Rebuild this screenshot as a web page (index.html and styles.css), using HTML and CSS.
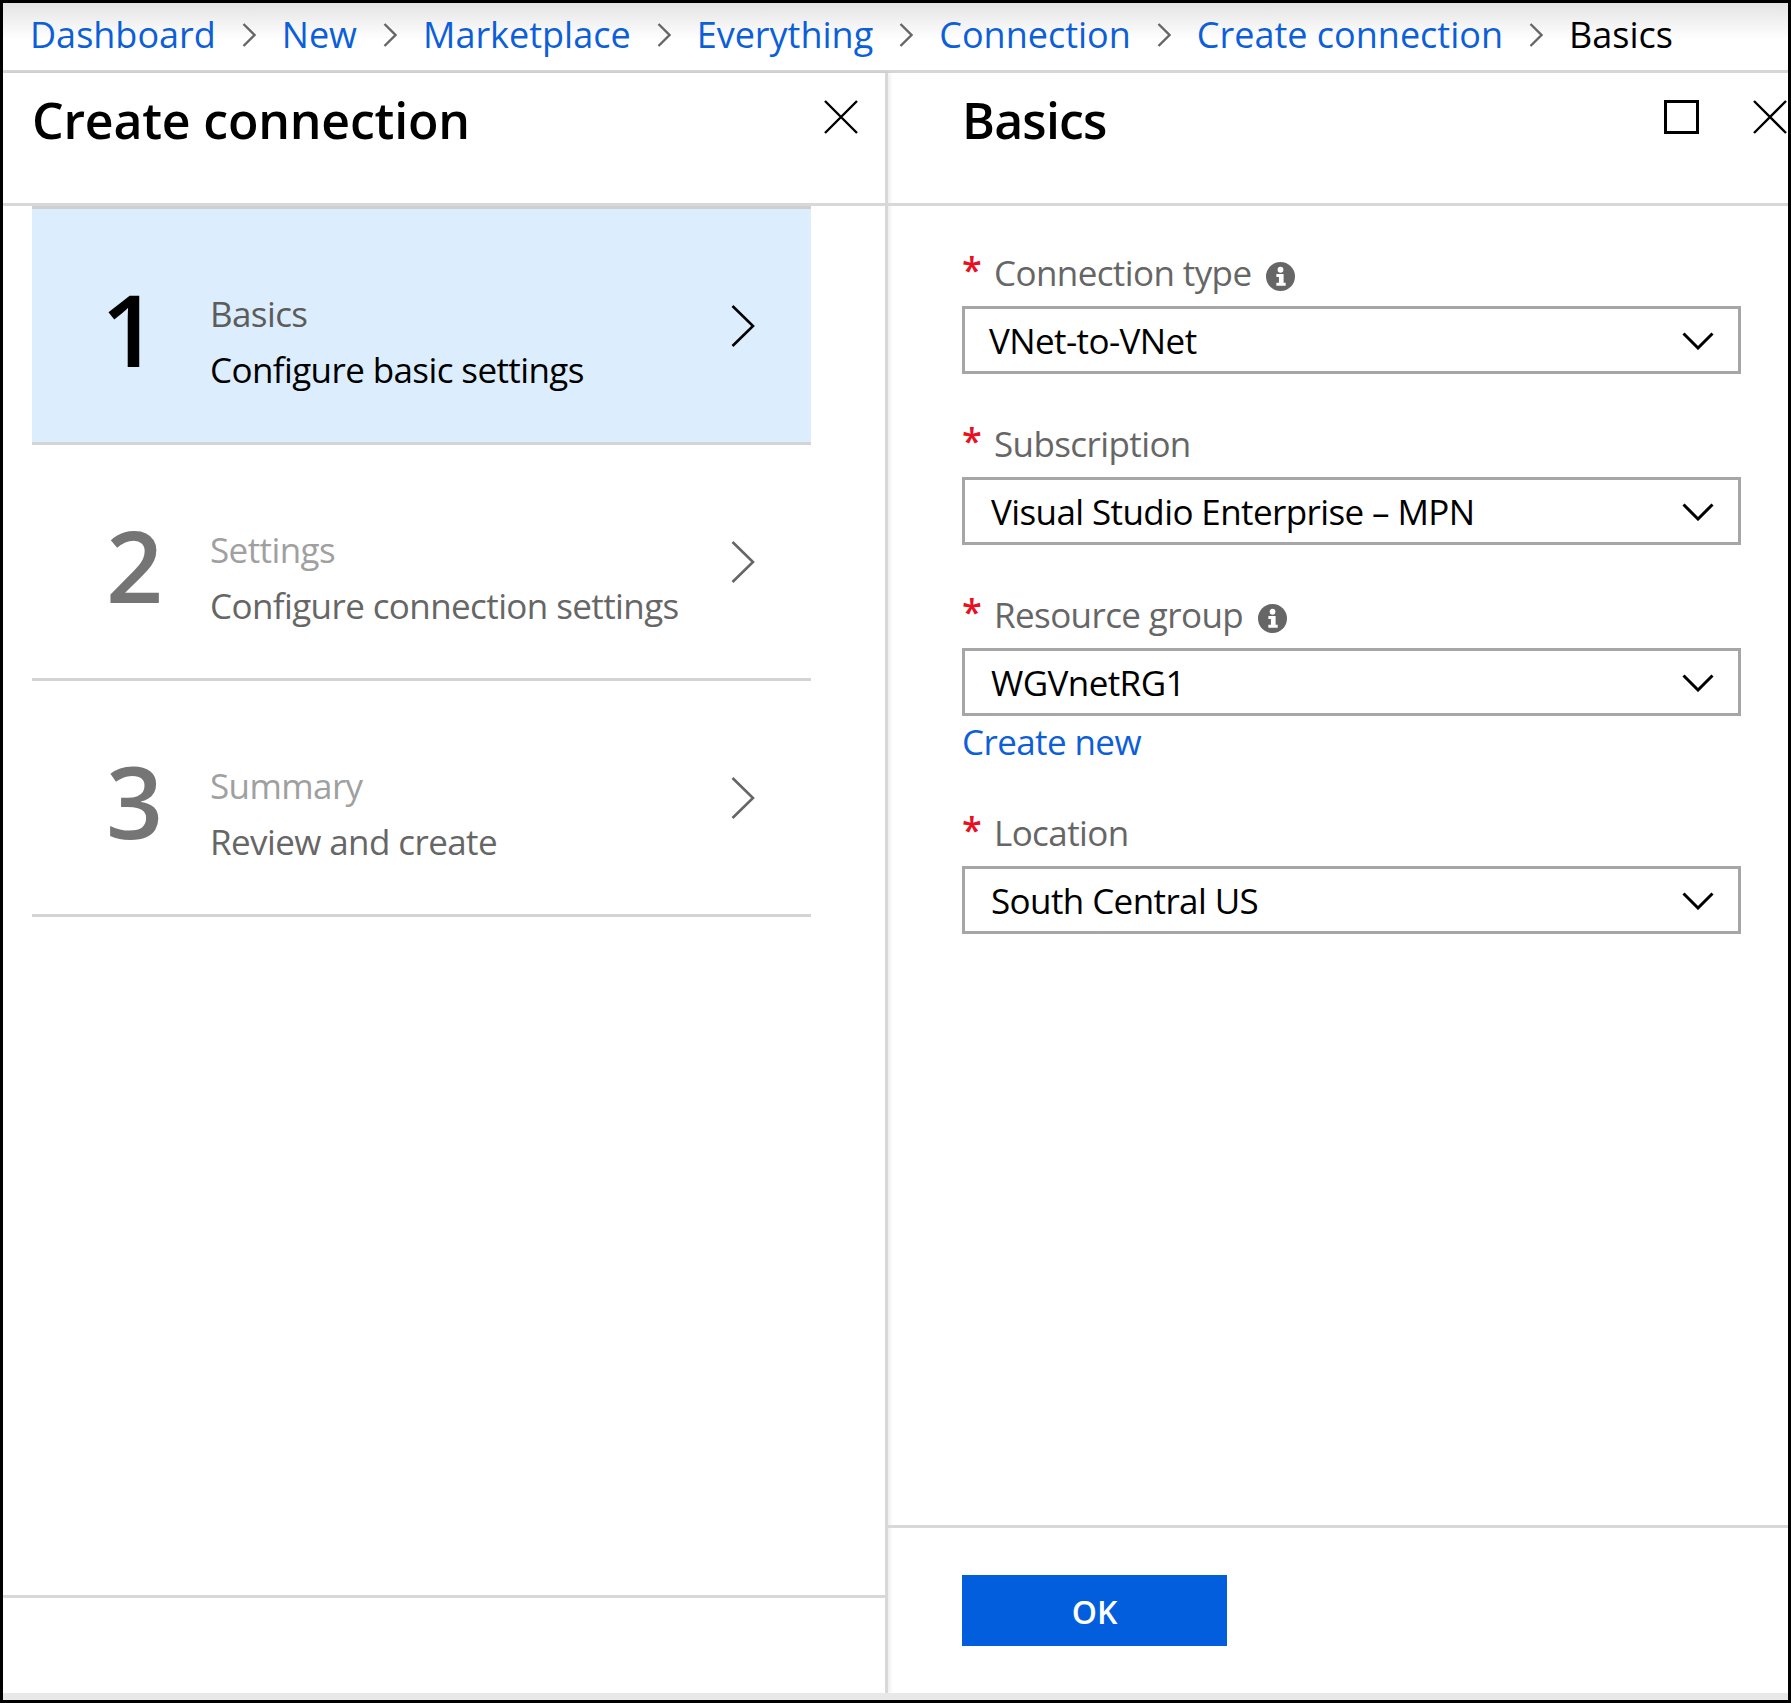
FILE: index.html
```html
<!DOCTYPE html>
<html lang="en">
<head>
<meta charset="UTF-8" />
<meta name="viewport" content="width=device-width, initial-scale=1" />
<title>Basics - Create connection</title>
<link rel="stylesheet" href="styles.css">
</head>
<body>
  <svg class="icon-defs" aria-hidden="true">
    <symbol id="crumb" viewBox="0 0 14 24"><path d="M1.5 1 L12.5 12 L1.5 23" fill="none" stroke="currentColor" stroke-width="2.4" /></symbol>
    <symbol id="chevron" viewBox="0 0 24 42"><path d="M1.5 1 L22 21 L1.5 41" fill="none" stroke="currentColor" stroke-width="2.6" /></symbol>
    <symbol id="close" viewBox="0 0 34 34"><path d="M1 1 L33 33 M33 1 L1 33" fill="none" stroke="#000" stroke-width="2.4" /></symbol>
    <symbol id="caret" viewBox="0 0 32 18"><path d="M1.5 1.5 L16 16 L30.5 1.5" fill="none" stroke="#000" stroke-width="3" /></symbol>
    <symbol id="info" viewBox="0 0 28 28"><circle cx="14" cy="14" r="14" fill="#666" /><circle cx="14" cy="7.5" r="2.8" fill="#fff" /><path d="M10 11.5 H17 V20 H19 V23 H10 V20 H12.5 V14.5 H10 Z" fill="#fff" /></symbol>
  </svg>

  <div class="frame">
    <nav class="breadcrumb" aria-label="Breadcrumb">
      <a href="#">Dashboard</a>
      <svg class="crumb-sep"><use href="#crumb" /></svg>
      <a href="#">New</a>
      <svg class="crumb-sep"><use href="#crumb" /></svg>
      <a href="#">Marketplace</a>
      <svg class="crumb-sep"><use href="#crumb" /></svg>
      <a href="#">Everything</a>
      <svg class="crumb-sep"><use href="#crumb" /></svg>
      <a href="#">Connection</a>
      <svg class="crumb-sep"><use href="#crumb" /></svg>
      <a href="#">Create connection</a>
      <svg class="crumb-sep"><use href="#crumb" /></svg>
      <span>Basics</span>
    </nav>

    <div class="blades">
      <section class="blade blade-left">
        <header class="blade-head head-left">
          <h1>Create connection</h1>
          <svg class="close-icon"><use href="#close" /></svg>
        </header>

        <div class="steps">
          <div class="step step-active">
            <div class="step-num">1</div>
            <div class="step-text">
              <div class="step-title">Basics</div>
              <div class="step-desc">Configure basic settings</div>
            </div>
            <svg class="step-chevron"><use href="#chevron" /></svg>
          </div>
          <div class="step">
            <div class="step-num">2</div>
            <div class="step-text">
              <div class="step-title">Settings</div>
              <div class="step-desc">Configure connection settings</div>
            </div>
            <svg class="step-chevron"><use href="#chevron" /></svg>
          </div>
          <div class="step">
            <div class="step-num">3</div>
            <div class="step-text">
              <div class="step-title">Summary</div>
              <div class="step-desc">Review and create</div>
            </div>
            <svg class="step-chevron"><use href="#chevron" /></svg>
          </div>
        </div>

        <footer class="foot-left"></footer>
      </section>

      <section class="blade blade-right">
        <header class="blade-head head-right">
          <h1>Basics</h1>
          <div class="head-actions">
            <div class="maximize"></div>
            <svg class="close-icon"><use href="#close" /></svg>
          </div>
        </header>

        <form class="form">
          <div class="field">
            <label class="field-label"><span class="req">*</span>Connection type<svg class="info-icon"><use href="#info" /></svg></label>
            <div class="select select-first"><span>VNet-to-VNet</span><svg class="caret"><use href="#caret" /></svg></div>
          </div>
          <div class="field">
            <label class="field-label"><span class="req">*</span>Subscription</label>
            <div class="select"><span>Visual Studio Enterprise – MPN</span><svg class="caret"><use href="#caret" /></svg></div>
          </div>
          <div class="field field-link">
            <label class="field-label"><span class="req">*</span>Resource group<svg class="info-icon"><use href="#info" /></svg></label>
            <div class="select"><span>WGVnetRG1</span><svg class="caret"><use href="#caret" /></svg></div>
            <a class="create-new" href="#">Create new</a>
          </div>
          <div class="field">
            <label class="field-label"><span class="req">*</span>Location</label>
            <div class="select"><span>South Central US</span><svg class="caret"><use href="#caret" /></svg></div>
          </div>
        </form>

        <footer class="foot-right">
          <button class="ok-btn" type="button">OK</button>
        </footer>
      </section>
    </div>

    <div class="bottom-strip"></div>
  </div>
</body>
</html>
```

FILE: styles.css
```css
/* Reset & base */
* {
  box-sizing: border-box;
}
html, body {
  margin: 0;
  padding: 0;
}
body {
  font-family: "Open Sans", "Noto Sans", sans-serif;
  font-size: 35px;
  letter-spacing: -0.6px;
  color: #000;
  background: #000;
}
a {
  color: #0c5fd9;
  text-decoration: none;
}
.icon-defs {
  display: none;
}

.frame {
  width: 1791px;
  height: 1703px;
  border: 3px solid #000;
  display: flex;
  flex-direction: column;
  background: #fff;
  overflow: hidden;
}

/* Breadcrumb */
.breadcrumb {
  flex: none;
  height: 70px;
  padding: 0 0 4px 27px;
  display: flex;
  align-items: center;
  gap: 26px;
  font-size: 36px;
  letter-spacing: 0;
  background: linear-gradient(#e4e4e4, #fff 55%);
  border-bottom: 3px solid #d6d6d6;
  white-space: nowrap;
}
.crumb-sep {
  width: 14px;
  height: 24px;
  color: #666;
}

/* Blades */
.blades {
  flex: 1;
  display: flex;
  min-height: 0;
}
.blade {
  display: flex;
  flex-direction: column;
}
.blade-left {
  flex: none;
  width: 885px;
  border-right: 3px solid #d8d8d8;
  box-shadow: 2px 0 4px rgba(0, 0, 0, 0.08);
}
.blade-right {
  flex: 1;
  min-width: 0;
  overflow: hidden;
}
.blade-head {
  flex: none;
  height: 133px;
  display: flex;
  justify-content: space-between;
  border-bottom: 3px solid #d8d8d8;
}
.blade-head h1 {
  margin: 0;
  font-size: 50px;
  line-height: 90px;
  font-weight: 600;
  letter-spacing: -0.8px;
}
.head-left {
  padding: 2px 27px 0 29px;
}
.head-left h1 {
  letter-spacing: -0.2px;
}
.head-right {
  padding: 2px 0 0 74px;
}
.close-icon {
  width: 34px;
  height: 34px;
  margin-top: 25px;
  flex: none;
}
.head-actions {
  display: flex;
  gap: 54px;
  margin-right: 1px;
}
.maximize {
  width: 35px;
  height: 34px;
  margin-top: 25px;
  border: 3px solid #000;
}

/* Steps */
.steps {
  flex: 1;
  margin: 0 74px 0 29px;
}
.step {
  height: 236px;
  display: flex;
  align-items: center;
  padding: 0 56px 0 74px;
  border-bottom: 3px solid #d4d4d4;
  color: #666;
}
.step-active {
  height: 239px;
  border-top: 3px solid #cfcfcf;
  background: #dceefd;
  color: #000;
}
.step-num {
  width: 104px;
  padding-top: 4px;
  font-size: 100px;
  line-height: 120px;
  font-weight: 600;
  color: #757575;
}
.step-active .step-num {
  text-indent: -5px;
  color: #000;
}
.step-text {
  flex: 1;
  padding-top: 32px;
}
.step-title {
  line-height: 56px;
  color: #a0a0a0;
}
.step-desc {
  line-height: 56px;
}
.step-active .step-title {
  color: #5c5c5c;
}
.step-chevron {
  width: 24px;
  height: 42px;
}
.foot-left {
  flex: none;
  height: 98px;
  border-top: 3px solid #d8d8d8;
}

/* Form */
.form {
  flex: 1;
  padding: 40px 47px 0 74px;
}
.field {
  margin-bottom: 43px;
}
.field-link {
  margin-bottom: 38px;
}
.field-label {
  display: flex;
  align-items: center;
  height: 60px;
  padding-bottom: 8px;
  color: #666;
}
.req {
  width: 32px;
  height: 30px;
  margin-bottom: 4px;
  font-size: 36px;
  line-height: 30px;
  font-weight: 600;
  color: #e81123;
}
.info-icon {
  width: 29px;
  height: 29px;
  margin-left: 15px;
  margin-top: 8px;
}
.select {
  height: 68px;
  display: flex;
  align-items: center;
  justify-content: space-between;
  padding: 0 10px 0 26px;
  border: 3px solid #a6a6a6;
}
.select-first {
  padding-left: 24px;
}
.caret {
  width: 32px;
  height: 18px;
  margin-top: 2px;
  margin-right: 14px;
}
.create-new {
  display: block;
  line-height: 52px;
}

/* Footer */
.foot-right {
  flex: none;
  height: 168px;
  padding: 47px 0 0 74px;
  border-top: 3px solid #d8d8d8;
}
.ok-btn {
  display: block;
  width: 265px;
  height: 71px;
  border: 0;
  padding: 2px 0 0;
  background: #025edd;
  color: #fff;
  font-family: inherit;
  font-size: 32px;
  font-weight: 600;
}

.bottom-strip {
  flex: none;
  height: 7px;
  background: #e8e8e8;
}
```
